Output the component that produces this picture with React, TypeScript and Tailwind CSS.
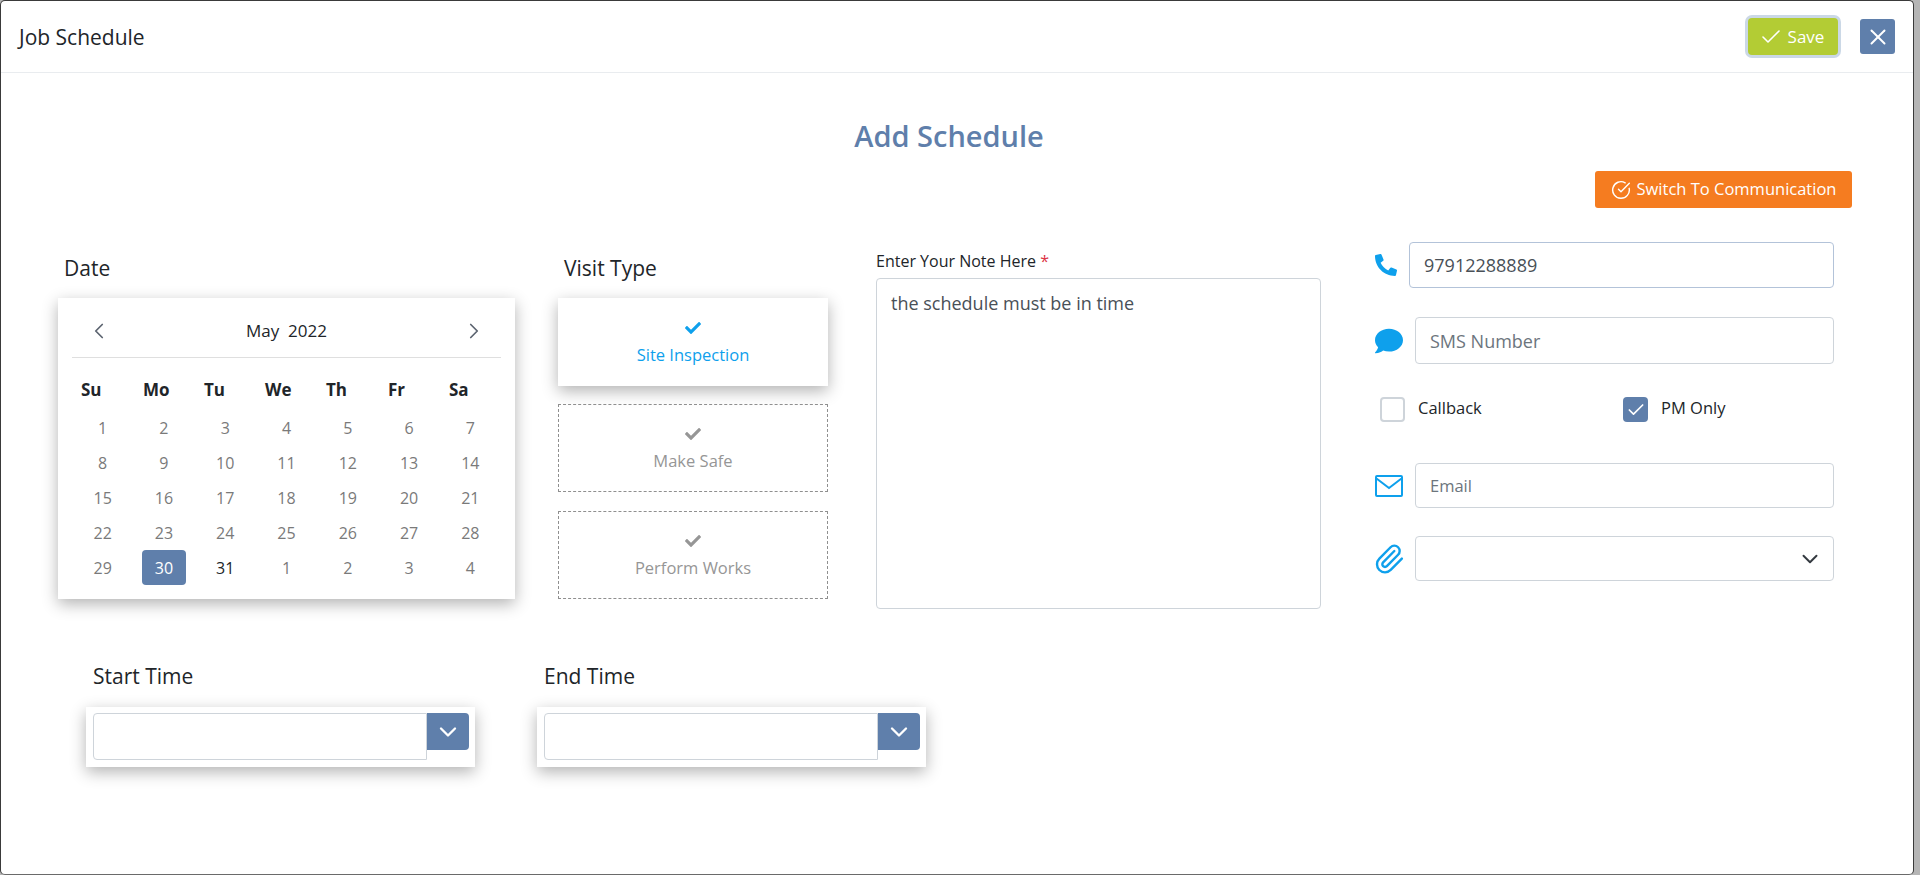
import { Check, ChevronDown, ChevronLeft, ChevronRight, CircleCheckBig, Paperclip, X } from "lucide-react";
import { FaCheck, FaComment, FaPhoneAlt } from "react-icons/fa";

const weekDays = [
  { name: "Su", cls: "w-[62px]" },
  { name: "Mo", cls: "w-[61px]" },
  { name: "Tu", cls: "w-[61px]" },
  { name: "We", cls: "w-[61px]" },
  { name: "Th", cls: "w-[62px]" },
  { name: "Fr", cls: "w-[61px]" },
  { name: "Sa", cls: "w-[61px]" },
];

const weeks = [
  ["1", "2", "3", "4", "5", "6", "7"],
  ["8", "9", "10", "11", "12", "13", "14"],
  ["15", "16", "17", "18", "19", "20", "21"],
  ["22", "23", "24", "25", "26", "27", "28"],
  ["29", "30", "31", "1", "2", "3", "4"],
];

const visitTypes = [
  { name: "Site Inspection", active: true },
  { name: "Make Safe", active: false },
  { name: "Perform Works", active: false },
];

function Calendar() {
  return (
    <div className="h-[301px] w-[457px] bg-white px-[14px] shadow-[0_5px_15px_rgba(0,0,0,0.3)]">
      <div className="flex h-[60px] items-center justify-between border-b border-[#dfdfdf] px-[14px] pt-[6px]">
        <ChevronLeft className="h-[26px] w-[26px] text-[#5c6470]" strokeWidth={1.6} />
        <span className="text-[17px] text-[#212529]">May&nbsp; 2022</span>
        <ChevronRight className="h-[26px] w-[26px] text-[#5c6470]" strokeWidth={1.6} />
      </div>
      <div className="flex h-[52px] items-center pl-[9px] pt-[12px]">
        {weekDays.map((d) => (
          <span key={d.name} className={`${d.cls} shrink-0 text-[17px] font-bold text-[#212529]`}>
            {d.name}
          </span>
        ))}
      </div>
      <div className="grid grid-cols-7">
        {weeks.flat().map((day, i) => (
          <div key={i} className="flex h-[35px] items-center justify-center">
            {i === 29 ? (
              <span className="flex h-[35px] w-[44px] items-center justify-center rounded-[4px] bg-[#5f7fab] text-[16px] text-white">
                {day}
              </span>
            ) : (
              <span className={`text-[16px] ${i === 30 ? "text-[#212529]" : "text-[#7a7a7a]"}`}>{day}</span>
            )}
          </div>
        ))}
      </div>
    </div>
  );
}

function TimeField({ label, gap }: { label: string; gap: string }) {
  return (
    <div className={gap}>
      <div className="ml-[7px] mb-[18px] h-[25px] text-[21px] leading-[25px] font-medium text-[#212529]">{label}</div>
      <div className="flex h-[60px] w-[389px] items-start bg-white pl-[7px] pt-[6px] shadow-[0_5px_15px_rgba(0,0,0,0.3)]">
        <div className="h-[47px] w-[334px] rounded-l-[4px] border border-[#ced4da] bg-white" />
        <div className="flex h-[37px] w-[42px] items-center justify-center rounded-r-[4px] bg-[#5f7fab]">
          <ChevronDown className="h-[28px] w-[28px] text-white" strokeWidth={2} />
        </div>
      </div>
    </div>
  );
}

export default function App() {
  return (
    <div className="h-[875px] w-[1920px] overflow-hidden bg-[#b5b5b5] font-['Open_Sans',sans-serif]">
      <div className="h-[875px] w-[1914px] rounded-[5px] border border-[#3a3a3a] border-b-[#6a6a6a] bg-white">
        {/* Header */}
        <div className="flex h-[72px] items-center justify-between border-b border-[#e9ecef] pl-[18px] pr-[18px]">
          <h1 className="pt-[2px] text-[21px] text-[#212529]">Job Schedule</h1>
          <div className="flex items-center gap-[22px]">
            <button className="flex h-[37px] w-[90px] items-center justify-center gap-[5px] rounded-[4px] bg-[#b3cc34] pr-[3px] text-[17px] text-white shadow-[0_0_0_3px_#cbd8e6]">
              <Check className="h-[24px] w-[24px]" strokeWidth={1.6} />
              Save
            </button>
            <button className="flex h-[35px] w-[35px] items-center justify-center rounded-[3px] bg-[#5f7fab] text-white">
              <X className="h-[26px] w-[26px]" strokeWidth={1.8} />
            </button>
          </div>
        </div>

        {/* Title */}
        <h2 className="mt-[43px] h-[40px] pr-[16px] text-center text-[29px] leading-[40px] font-semibold text-[#5f7fab]">Add Schedule</h2>
        <div className="mt-[15px] flex justify-end pr-[61px]">
          <button className="flex h-[37px] w-[257px] items-center justify-center gap-[6px] rounded-[3px] bg-[#f57c20] text-[16.5px] text-white">
            <CircleCheckBig className="h-[20px] w-[20px]" strokeWidth={1.7} />
            Switch To Communication
          </button>
        </div>

        {/* Main row */}
        <div className="mt-[47px] flex items-start pl-[57px]">
          <div className="w-[457px]">
            <div className="ml-[6px] mb-[18px] h-[25px] pt-[1px] text-[21px] leading-[25px] font-medium text-[#212529]">Date</div>
            <Calendar />
          </div>

          <div className="ml-[43px] w-[270px]">
            <div className="ml-[6px] mb-[18px] h-[25px] pt-[1px] text-[21px] leading-[25px] font-medium text-[#212529]">Visit Type</div>
            <div className="flex flex-col gap-[18px]">
              {visitTypes.map((v) => (
                <div
                  key={v.name}
                  className={
                    v.active
                      ? "flex h-[88px] flex-col items-center justify-center gap-[9px] bg-white pt-[1px] text-[#0ea0ec] shadow-[0_5px_15px_rgba(0,0,0,0.3)]"
                      : "flex h-[88px] flex-col items-center justify-center gap-[9px] border border-dashed border-[#8f8f8f] pt-[1px] text-[#969696] last:mt-[1px]"
                  }
                >
                  <FaCheck className="h-[16px] w-[16px]" />
                  <span className="text-[16.5px] leading-[20px]">{v.name}</span>
                </div>
              ))}
            </div>
          </div>

          <div className="-mt-[4px] ml-[48px] w-[445px]">
            <div className="mb-[7px] h-[20px] text-[16px] leading-[20px] text-[#212529]">
              Enter Your Note Here <span className="text-[#dc3545]">*</span>
            </div>
            <div className="h-[331px] rounded-[4px] border border-[#ced4da] px-[14px] py-[12px] text-[18px] leading-[24px] text-[#495057]">
              the schedule must be in time
            </div>
          </div>

          <div className="-mt-[13px] ml-[54px] w-[459px]">
            <div className="flex h-[46px] items-center">
              <FaPhoneAlt className="h-[22px] w-[22px] text-[#0ea0ec]" />
              <div className="ml-[12px] flex h-[46px] w-[425px] items-center rounded-[4px] border border-[#b3c3d9] px-[14px] text-[18px] text-[#495057]">
                97912288889
              </div>
            </div>
            <div className="mt-[29px] flex h-[47px] items-center">
              <FaComment className="h-[28px] w-[28px] text-[#0ea0ec]" />
              <div className="ml-[12px] flex h-[47px] w-[419px] items-center rounded-[4px] border border-[#ced4da] px-[14px] pt-[2px] text-[18px] text-[#6c757d]">
                SMS Number
              </div>
            </div>
            <div className="mt-[33px] flex h-[25px] items-center pl-[5px]">
              <div className="h-[25px] w-[25px] rounded-[4px] border-2 border-[#ced4da]" />
              <span className="-mt-[2px] ml-[13px] w-[205px] text-[16.5px] text-[#212529]">Callback</span>
              <div className="flex h-[25px] w-[25px] items-center justify-center rounded-[4px] bg-[#5f7fab]">
                <Check className="h-[20px] w-[20px] text-white" strokeWidth={2} />
              </div>
              <span className="-mt-[2px] ml-[13px] text-[16.5px] text-[#212529]">PM Only</span>
            </div>
            <div className="mt-[41px] flex h-[45px] items-center">
              <svg viewBox="0 0 28 22" className="h-[22px] w-[28px] text-[#0ea0ec]" fill="none" stroke="currentColor" strokeWidth="2">
                <rect x="1" y="1" width="26" height="20" rx="1" />
                <path d="M1.5 3.5 14 13l12.5-9.5" />
              </svg>
              <div className="ml-[12px] flex h-[45px] w-[419px] items-center rounded-[4px] border border-[#ced4da] px-[14px] pt-[2px] text-[16.5px] text-[#6c757d]">
                Email
              </div>
            </div>
            <div className="mt-[28px] flex h-[45px] items-center">
              <Paperclip className="h-[32px] w-[32px] shrink-0 -ml-[2px] text-[#0ea0ec]" strokeWidth={1.8} />
              <div className="ml-[10px] flex h-[45px] w-[419px] items-center justify-end rounded-[4px] border border-[#ced4da] pr-[10px]">
                <ChevronDown className="h-[26px] w-[26px] text-[#343a40]" strokeWidth={1.8} />
              </div>
            </div>
          </div>
        </div>

        {/* Time fields */}
        <div className="mt-[55px] flex pl-[85px]">
          <TimeField label="Start Time" gap="" />
          <TimeField label="End Time" gap="ml-[62px]" />
        </div>
      </div>
    </div>
  );
}
